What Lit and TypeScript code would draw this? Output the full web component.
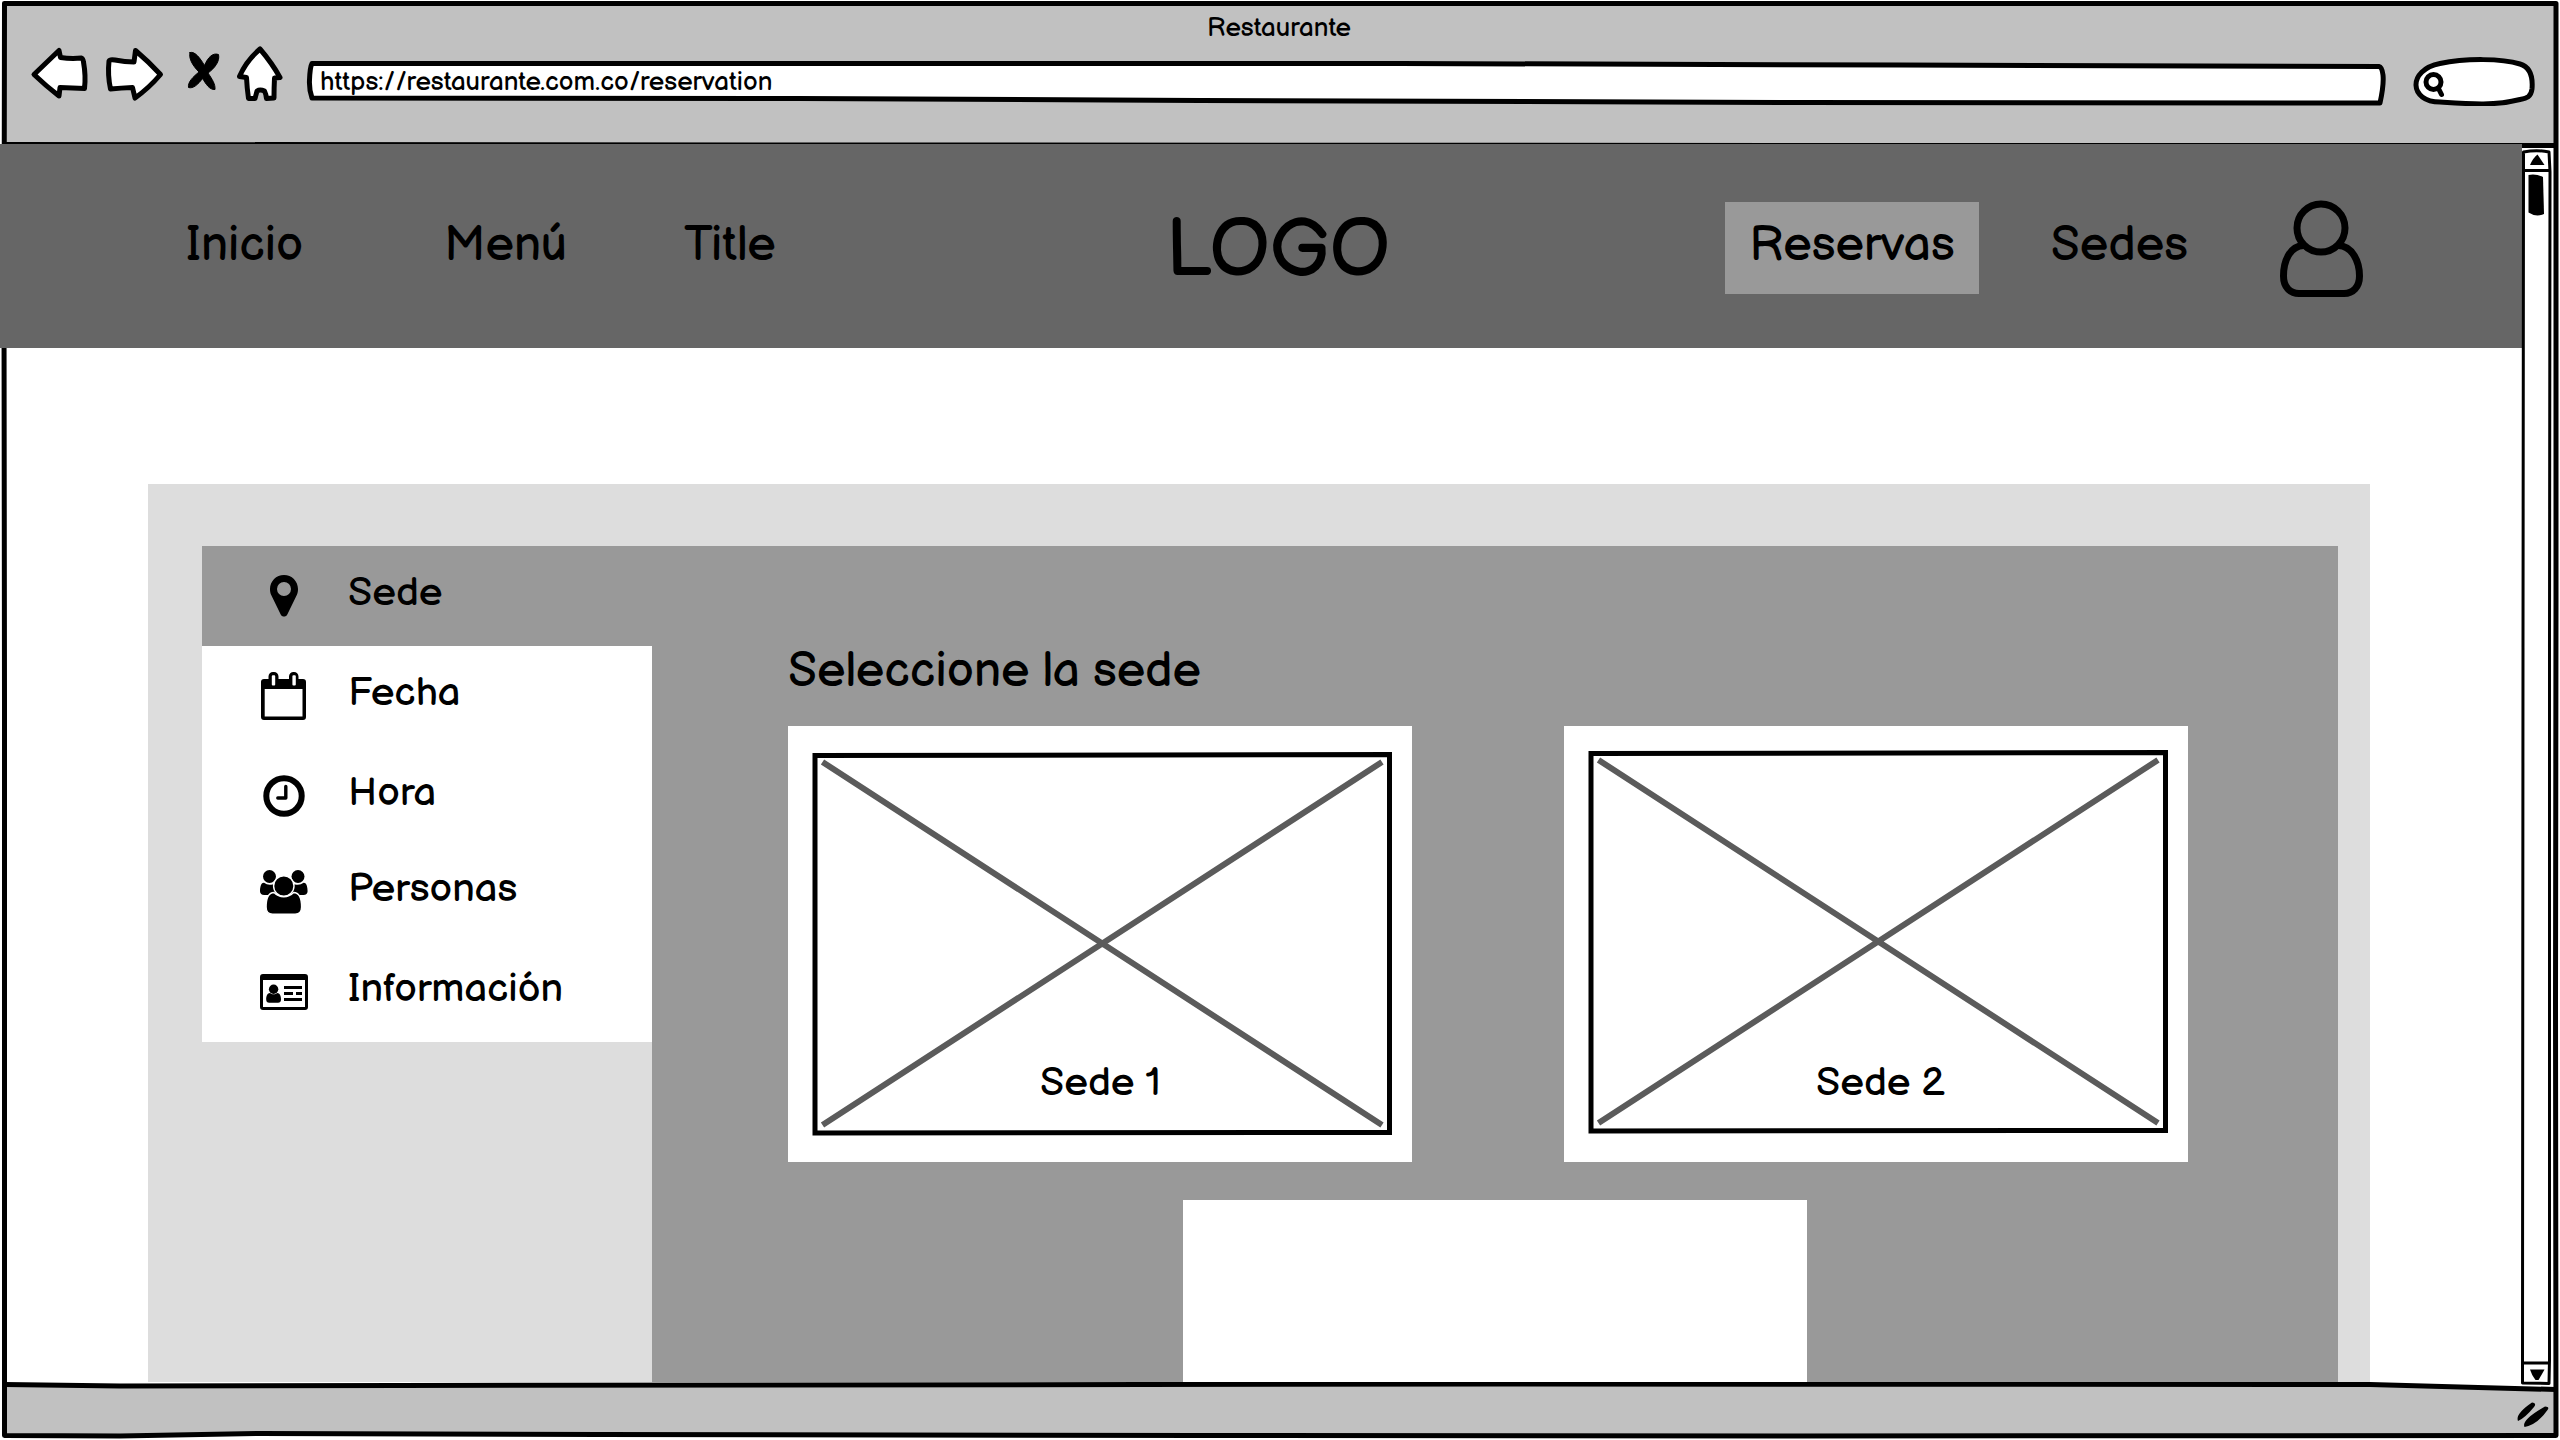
import { LitElement, html, css, svg, nothing } from "lit";
import { customElement, state } from "lit/decorators.js";
import { classMap } from "lit/directives/class-map.js";

const stepIcons = {
  pin: svg`<path fill-rule="evenodd" d="M24 3c7.800 0 14 6.200 14 14 0 2.500-.4 4.300-1.200 6L27.300 42.500c-1.300 2.700-5.300 2.700-6.600 0L11.200 23c-.8-1.700-1.200-3.500-1.200-6C10 9.200 16.200 3 24 3zm0 7a7 7 0 1 0 0 14 7 7 0 0 0 0-14z"/>`,
  calendar: svg`<path fill-rule="evenodd" d="M4 7h4.500V4.500a4.500 4.500 0 0 1 4.500-4.500h1a4.500 4.500 0 0 1 4.500 4.500V7h10.500V4.500a4.500 4.500 0 0 1 4.500-4.500h.5a4.500 4.500 0 0 1 4.500 4.500V7H43a3 3 0 0 1 3 3v35a3 3 0 0 1-3 3H4a3 3 0 0 1-3-3V10a3 3 0 0 1 3-3zm.7 10v27.500h37.800V17zM12.800 3.300a1 1 0 0 0-1 1v8.200a1 1 0 0 0 1 1h1.400a1 1 0 0 0 1-1V4.300a1 1 0 0 0-1-1zm20.600 0a1 1 0 0 0-1 1v8.200a1 1 0 0 0 1 1h1.400a1 1 0 0 0 1-1V4.300a1 1 0 0 0-1-1z"/>`,
  clock: svg`<circle cx="24" cy="24" r="17.700" fill="none" stroke="#000" stroke-width="6"/><path d="M17.800 26h8V14.500" fill="none" stroke="#000" stroke-width="3.400" stroke-linecap="round" stroke-linejoin="round"/>`,
  people: svg`<circle cx="9.500" cy="8.500" r="6.500"/><circle cx="38" cy="8.500" r="6.500"/>
    <path d="M4 14.800c2 1.300 3.500 2 5.800 2 2 0 3.500-.4 5-1 -.5 4.800.2 8.200 2.500 11.200H4.200C1.600 27 0 25.700 0 23.300 0 20 .7 14.600 4 14.800zM43.600 14.800c-2 1.300-3.500 2-5.800 2-2 0-3.500-.4-5-1 .5 4.800-.2 8.200-2.500 11.200h13.100c2.600 0 4.200-1.300 4.200-3.700 0-3.300-.7-8.700-4-8.500z"/>
    <path d="M14 24.500c3 3 6 4.200 9.800 4.200s6.800-1.200 9.800-4.200c6.600.2 8 8 8 14.500 0 4.700-2.500 7.200-6.500 7.200H12.600c-4 0-6.500-2.500-6.500-7.200 0-6.500 1.400-14.300 7.900-14.500z" stroke="#fff" stroke-width="1.400"/>
    <circle cx="23.800" cy="18" r="10.200" stroke="#fff" stroke-width="1.400"/>`,
  card: svg`<path fill-rule="evenodd" d="M3 6h42a3 3 0 0 1 3 3v30a3 3 0 0 1-3 3H3a3 3 0 0 1-3-3V9a3 3 0 0 1 3-3zm0 6v27h42V12z"/>
    <circle cx="13.600" cy="21.300" r="4.700"/><path d="M10 25c2 1.700 5.200 1.700 7.200 0 3.300.2 3.800 4 3.800 6.500 0 2.200-1.200 3.300-3 3.300H9.200c-1.800 0-3-1.100-3-3.300 0-2.500.5-6.300 3.800-6.500z"/>
    <path d="M24 19.500h18M24 25.500h9M36 25.500h6M24 31.500h18" stroke="#000" stroke-width="2.800"/>`,
};

interface Step {
  label: string;
  icon: keyof typeof stepIcons;
  compact?: boolean;
}

const steps: Step[] = [
  { label: "Sede", icon: "pin" },
  { label: "Fecha", icon: "calendar" },
  { label: "Hora", icon: "clock", compact: true },
  { label: "Personas", icon: "people" },
  { label: "Información", icon: "card" },
];

const sketchFont = css`
  font-family: "Balsamiq Sans", "Liberation Sans", sans-serif;
`;

@customElement("browser-toolbar")
export class BrowserToolbar extends LitElement {
  static styles = css`
    :host {
      display: block;
      flex: none;
      height: 144px;
      box-sizing: border-box;
      padding: 13px 24px 0 28px;
      ${sketchFont}
      font-size: 26px;
      line-height: 32px;
    }
    .title {
      text-align: center;
      padding-right: 6px;
      margin-bottom: 1px;
    }
    .row {
      display: flex;
      gap: 12px;
      height: 60px;
    }
    button {
      flex: none;
      padding: 0;
      border: 0;
      background: none;
    }
    svg {
      display: block;
      height: 60px;
      stroke: #000;
      stroke-width: 5;
      stroke-linejoin: round;
      stroke-linecap: round;
      fill: #fff;
    }
    .solid {
      fill: #000;
      stroke-width: 1;
    }
    .field {
      display: grid;
      flex: none;
    }
    .address {
      flex: 1;
    }
    .field > * {
      grid-area: 1 / 1;
      min-width: 0;
    }
    .address svg {
      width: 100%;
    }
    input {
      border: 0;
      outline: 0;
      background: none;
      font: inherit;
      color: #000;
      padding: 0 16px 0 18px;
      height: 36px;
      margin-top: 18px;
    }
    .search input {
      width: 134px;
      box-sizing: border-box;
      padding-left: 48px;
    }
  `;

  render() {
    return html`
      <div class="title">Restaurante</div>
      <div class="row">
        <button aria-label="Atrás">
          <svg width="64" viewBox="28 46 64 60">
            <path d="M34 74.500 59 50.500 60.500 57.500Q71 59 81.500 58 83 58.500 83.500 62 86 76 84.500 88.500 72 88 60 87.500L59 96Q46 86 34 74.500z" />
          </svg>
        </button>
        <button aria-label="Adelante">
          <svg width="64" viewBox="104 46 64 60">
            <path d="M109 61Q110 59 115 60 125 62 134 62L135.500 50.500Q149 62 160.500 74.500 149 88 135 98L132.500 87.500Q121 88 110.500 89 107.500 75 109 61z" />
          </svg>
        </button>
        <button aria-label="Detener">
          <svg class="solid" width="44" viewBox="180 46 44 60">
            <path d="M190 52.500C195 51 200 58 204.500 65.500 208 57 213 52.500 218.500 54.500 220 61 215 68 208 73 212 79 215.500 84 215 89.500 209.500 90 206 84 202.500 78.500 198 84.500 193 89 188.500 87.500 187.500 82 193.500 76.500 199 72 192 65 188.500 58 190 52.500z" />
          </svg>
        </button>
        <button aria-label="Inicio">
          <svg width="54" viewBox="236 46 54 60">
            <path d="M260 49Q272 63 280 77.500L274.500 78Q274 88 274 98L266.500 98.500Q266 94 264.500 91 260 89 257 91 256 95 255 98.500L248.500 98.500Q247 88 246.500 77.500L239.500 76.500Q246 61 260 49z" />
          </svg>
        </button>
        <label class="field address">
          <svg viewBox="302 46 2088 60" preserveAspectRatio="none" aria-hidden="true">
            <path vector-effect="non-scaling-stroke" d="M312 63.500 1400 63.500 1900 65 2379 66.500Q2382 67 2383 75 2384 85 2380 103L1800 102.500 1200 100.500 800 98.500 312 98Q309 90 309.500 80 310 67 312 63.500z" />
          </svg>
          <input type="text" aria-label="Dirección" value="https://restaurante.com.co/reservation" />
        </label>
        <label class="field search">
          <svg width="134" viewBox="2402 46 134 60" aria-hidden="true">
            <path d="M2440 102C2409 102 2407 70 2440 63.500 2466 58 2502 58.500 2520 64 2530 67 2533 77 2532 89 2531 97 2527 98 2520 99.500 2495 106 2470 104 2440 102z" />
            <circle cx="2433.500" cy="82" r="7.500" />
            <path d="M2438.500 88.500 2441.500 94.500" />
          </svg>
          <input type="text" aria-label="Buscar" />
        </label>
      </div>
    `;
  }
}

@customElement("site-header")
export class SiteHeader extends LitElement {
  static styles = css`
    :host {
      display: grid;
      grid-template-columns: 1fr auto 1fr;
      align-items: center;
      flex: none;
      height: 204px;
      box-sizing: border-box;
      padding: 4px 148px 0 186px;
      background: #666;
      ${sketchFont}
      font-size: 48px;
      line-height: 58px;
    }
    nav {
      display: flex;
      align-items: center;
    }
    .left {
      display: grid;
      grid-template-columns: 258px 240px auto;
      justify-content: start;
    }
    .right {
      justify-content: end;
      gap: 48px;
    }
    a {
      color: #000;
      text-decoration: none;
      padding: 15px 0 19px;
    }
    .right a {
      padding: 15px 24px 19px;
    }
    .right a.current {
      background: #999;
    }
    .right a.account {
      padding: 0;
    }
    .logo {
      font-size: 80px;
      line-height: 96px;
      padding: 6px 4px 0 0;
    }
    svg {
      display: block;
      fill: none;
      stroke: #000;
      stroke-width: 7;
    }
  `;

  render() {
    return html`
      <nav class="left">
        <a href="#inicio">Inicio</a>
        <a href="#menu">Menú</a>
        <a href="#title">Title</a>
      </nav>
      <div class="logo">LOGO</div>
      <nav class="right">
        <a class="current" href="#reservas" aria-current="page">Reservas</a>
        <a href="#sedes">Sedes</a>
        <a class="account" href="#cuenta" aria-label="Cuenta">
          <svg width="114" height="100" viewBox="2260 198 114 100">
            <circle cx="2321" cy="228" r="24" />
            <path d="M2303.500 245.500C2290 246 2283.500 261 2283.500 276 2283.500 287 2290 293.500 2299 293.500H2344C2353 293.500 2359.500 287 2359.500 276 2359.500 261 2352 246 2338.500 245.500" />
          </svg>
        </a>
      </nav>
    `;
  }
}

@customElement("location-card")
export class LocationCard extends LitElement {
  static properties = { label: {}, raised: { type: Boolean } };
  declare label: string;
  declare raised: boolean;

  static styles = css`
    :host {
      display: block;
      ${sketchFont}
      font-size: 40px;
      line-height: 48px;
    }
    button {
      display: grid;
      width: 100%;
      height: 436px;
      padding: 0;
      border: 0;
      background: #fff;
      font: inherit;
      color: #000;
      text-align: left;
    }
    button > * {
      grid-area: 1 / 1;
    }
    svg {
      display: block;
      box-sizing: border-box;
      width: 100%;
      height: 436px;
      padding: 26px 20px 26px 24px;
      fill: none;
    }
    .raised {
      padding: 24px 20px 28px 24px;
    }
    .frame {
      stroke: #000;
      stroke-width: 5;
    }
    .cross {
      stroke: #5b5b5b;
      stroke-width: 6;
    }
    .caption {
      align-self: end;
      padding: 0 0 55px 252px;
    }
  `;

  render() {
    return html`
      <button aria-label=${this.label || "Sede"}>
        ${this.label
          ? html`<svg class=${classMap({ raised: this.raised })} viewBox="0 0 580 384" preserveAspectRatio="none" aria-hidden="true">
                <path class="cross" d="M10.500 10 570 373M10.500 373 570 10" />
                <path class="frame" d="M3 3.500 577.500 2.500V380.500L3 381z" />
              </svg>
              <span class="caption">${this.label}</span>`
          : nothing}
      </button>
    `;
  }
}

@customElement("reservation-panel")
export class ReservationPanel extends LitElement {
  @state() private current = 0;

  static styles = css`
    :host {
      display: grid;
      grid-template-columns: 450px 1fr;
      flex: 1;
      min-height: 0;
      margin: 136px 152px 0 148px;
      padding: 62px 32px 0 54px;
      background: #ddd;
      ${sketchFont}
    }
    .steps {
      list-style: none;
      margin: 0;
      padding: 0;
    }
    .step {
      display: flex;
      align-items: center;
      gap: 40px;
      width: 100%;
      height: 100px;
      padding: 0 0 0 58px;
      border: 0;
      background: #fff;
      color: #000;
      font: inherit;
      font-size: 40px;
      line-height: 48px;
    }
    .compact {
      height: 96px;
      padding-top: 4px;
    }
    .active {
      background: #999;
    }
    .step span {
      padding-bottom: 6px;
    }
    .content {
      background: #999;
      padding-top: 97px;
    }
    h1 {
      margin: 0 0 25px 136px;
      font-weight: 400;
      font-size: 48px;
      line-height: 58px;
    }
    .cards {
      display: grid;
      grid-template-columns: 1fr 1fr;
      gap: 152px;
      padding: 0 150px 0 136px;
    }
    .last {
      width: 624px;
      max-width: 100%;
      margin: 38px auto 0;
    }
  `;

  render() {
    return html`
      <ol class="steps">
        ${steps.map(
          (step, i) => html`
            <li>
              <button
                class=${classMap({ step: true, active: i === this.current, compact: !!step.compact })}
                @click=${() => (this.current = i)}
              >
                <svg width="48" height="48" viewBox="0 0 48 48" aria-hidden="true">${stepIcons[step.icon]}</svg>
                <span>${step.label}</span>
              </button>
            </li>
          `
        )}
      </ol>
      <section class="content">
        <h1>Seleccione la sede</h1>
        <div class="cards">
          <location-card label="Sede 1"></location-card>
          <location-card label="Sede 2" raised></location-card>
        </div>
        <location-card class="last"></location-card>
      </section>
    `;
  }
}

@customElement("page-scrollbar")
export class PageScrollbar extends LitElement {
  static styles = css`
    :host {
      display: flex;
      flex-direction: column;
      flex: none;
      width: 38px;
    }
    button {
      display: block;
      padding: 0;
      border: 0;
      background: none;
    }
    svg {
      display: block;
      overflow: visible;
      fill: none;
      stroke: #000;
      stroke-width: 3;
      stroke-linejoin: round;
    }
    .track {
      display: grid;
      flex: 1;
      min-height: 0;
    }
    .track > * {
      grid-area: 1 / 1;
    }
    .rails {
      width: 38px;
      height: 100%;
    }
    .solid {
      fill: #000;
      stroke: none;
    }
  `;

  render() {
    return html`
      <button aria-label="Subir">
        <svg width="38" height="28" viewBox="2522 144 38 28">
          <path d="M2523.500 172V152Q2537 149.500 2549 152L2550 172M2523 170.500H2551" />
          <path class="solid" d="M2537.500 154.500 2544.500 165H2530Q2533 158 2537.500 154.500z" />
        </svg>
      </button>
      <div class="track">
        <svg class="rails" viewBox="0 0 38 1000" preserveAspectRatio="none">
          <path d="M1.500 0 1 400 .5 1000M28 0 27.500 400 27.500 1000" />
        </svg>
        <svg width="38" height="44" viewBox="2522 172 38 44">
          <path class="solid" d="M2528.500 175Q2536 173.500 2543 177L2544 214Q2536 217.500 2528.500 212.500z" />
        </svg>
      </div>
      <button aria-label="Bajar">
        <svg width="38" height="22" viewBox="2522 1360 38 22">
          <path d="M2522.500 1360V1383L2549 1383.500 2549.500 1360M2523 1363H2549" />
          <path class="solid" d="M2530 1369.500H2544.500Q2541 1376 2538.500 1380H2535.500Q2532 1376 2530 1369.500z" />
        </svg>
      </button>
    `;
  }
}

@customElement("app-root")
export class AppRoot extends LitElement {
  static styles = css`
    :host {
      display: flex;
      flex-direction: column;
      position: relative;
      height: 100vh;
      overflow: hidden;
      background: #fff;
      color: #000;
    }
    .window {
      position: absolute;
      inset: 0;
      width: 100%;
      height: 100%;
      fill: none;
      stroke: #000;
      stroke-width: 5;
      stroke-linejoin: round;
    }
    .bar {
      fill: #c1c1c1;
      stroke: none;
    }
    browser-toolbar,
    .body,
    .status {
      position: relative;
    }
    .body {
      display: flex;
      flex: 1;
      min-height: 0;
    }
    .page {
      display: flex;
      flex-direction: column;
      flex: 1;
      min-width: 0;
      overflow: hidden;
    }
    .status {
      display: flex;
      justify-content: flex-end;
      flex: none;
      height: 58px;
      padding-right: 8px;
    }
  `;

  render() {
    return html`
      <svg class="window" viewBox="0 0 2560 1440" preserveAspectRatio="none" aria-hidden="true">
        <path class="bar" d="M4 4H2556V145H4zM4 1385H2300L2556 1389V1435H4z" />
        <path d="M4.500 3.500H2556L2556 600 2555.500 1000 2556 1435.500 1800 1436 1200 1435.500 600 1434.500 260 1433.500 120 1436 4.500 1435.500 4.500 700 4 300z" />
        <path d="M5 144.500 2000 145.500 2556 145.500M5 1384.500 120 1386 400 1385.500 1500 1384 2370 1384.500 2460 1387 2556 1389.500" />
      </svg>
      <browser-toolbar></browser-toolbar>
      <div class="body">
        <main class="page">
          <site-header></site-header>
          <reservation-panel></reservation-panel>
        </main>
        <page-scrollbar></page-scrollbar>
      </div>
      <footer class="status">
        <svg width="40" height="58" viewBox="2512 1382 40 58" aria-hidden="true">
          <path d="M2518 1421Q2515 1414 2532 1402.500 2537 1403 2534 1407 2525 1418 2518 1421zM2524.500 1427Q2521 1420 2545 1406.500 2550 1407 2547.500 1410 2537 1425 2524.500 1427z" />
        </svg>
      </footer>
    `;
  }
}
